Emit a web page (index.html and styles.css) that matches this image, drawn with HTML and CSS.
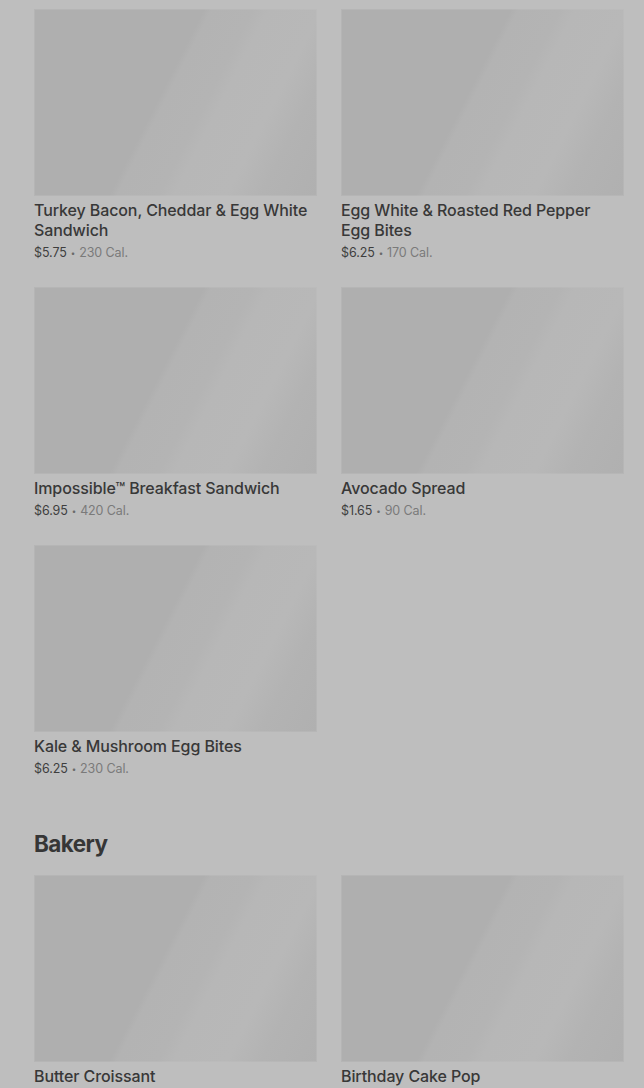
FILE: index.html
```html
<!DOCTYPE html>
<html lang="en">
<head>
<meta charset="utf-8">
<title>Menu</title>
<link rel="stylesheet" href="styles.css">
</head>
<body>
<main class="menu">
  <section class="section">
    <div class="grid">
      <a class="card">
        <div class="thumb"></div>
        <h3 class="name">Turkey Bacon, Cheddar &amp; Egg White Sandwich</h3>
        <p class="meta"><span class="price">$5.75</span><span class="dot">•</span><span class="cal">230 Cal.</span></p>
      </a>
      <a class="card">
        <div class="thumb"></div>
        <h3 class="name">Egg White &amp; Roasted Red Pepper Egg Bites</h3>
        <p class="meta"><span class="price">$6.25</span><span class="dot">•</span><span class="cal">170 Cal.</span></p>
      </a>
      <a class="card">
        <div class="thumb"></div>
        <h3 class="name">Impossible™ Breakfast Sandwich</h3>
        <p class="meta"><span class="price">$6.95</span><span class="dot">•</span><span class="cal">420 Cal.</span></p>
      </a>
      <a class="card">
        <div class="thumb"></div>
        <h3 class="name">Avocado Spread</h3>
        <p class="meta"><span class="price">$1.65</span><span class="dot">•</span><span class="cal">90 Cal.</span></p>
      </a>
      <a class="card">
        <div class="thumb"></div>
        <h3 class="name">Kale &amp; Mushroom Egg Bites</h3>
        <p class="meta"><span class="price">$6.25</span><span class="dot">•</span><span class="cal">230 Cal.</span></p>
      </a>
    </div>
  </section>
  <section class="section">
    <h2 class="section-title">Bakery</h2>
    <div class="grid">
      <a class="card">
        <div class="thumb"></div>
        <h3 class="name">Butter Croissant</h3>
        <p class="meta"><span class="price">$3.75</span><span class="dot">•</span><span class="cal">260 Cal.</span></p>
      </a>
      <a class="card">
        <div class="thumb"></div>
        <h3 class="name">Birthday Cake Pop</h3>
        <p class="meta"><span class="price">$2.95</span><span class="dot">•</span><span class="cal">160 Cal.</span></p>
      </a>
    </div>
  </section>
</main>
</body>
</html>
```
FILE: styles.css
```css
* { box-sizing: border-box; }
html, body { margin: 0; padding: 0; }
body {
  background: #bebebe;
  font-family: Inter, "Noto Sans", sans-serif;
  color: #3a3a3a;
  overflow: hidden;
}
.menu {
  padding: 9px 20px 0 34px;
}
.section + .section {
  margin-top: 49px;
}
.section-title {
  margin: 0 0 15px;
  font-size: 22.5px;
  line-height: 32px;
  font-weight: 700;
  letter-spacing: -0.6px;
  color: #363636;
}
.grid {
  display: grid;
  grid-template-columns: 283px 283px;
  column-gap: 24px;
  row-gap: 24px;
  align-items: start;
}
.card {
  display: block;
  text-decoration: none;
  color: inherit;
}
.thumb {
  height: 187px;
  background: linear-gradient(117deg, #afafaf 0%, #afafaf 45%, #b3b3b3 47%, #b4b4b4 58%, #b7b7b7 62%, #b8b8b8 76%, #b3b3b3 85%, #b0b0b0 100%);
  box-shadow: inset 0 0 0 1px rgba(195,195,195,0.3);
}
.name {
  margin: 4px 0 0;
  padding-right: 6px;
  font-size: 16px;
  line-height: 20px;
  font-weight: 500;
  letter-spacing: -0.1px;
  color: #383838;
}
.meta {
  display: flex;
  align-items: center;
  height: 20px;
  margin: 3px 0 0;
  font-size: 12.5px;
  line-height: 20px;
  letter-spacing: -0.1px;
}
.price { color: #3e3e3e; }
.dot { color: #6a6a6a; margin: 0 4px; font-size: 8px; line-height: 20px; }
.cal { color: #7a7a7a; }
```
